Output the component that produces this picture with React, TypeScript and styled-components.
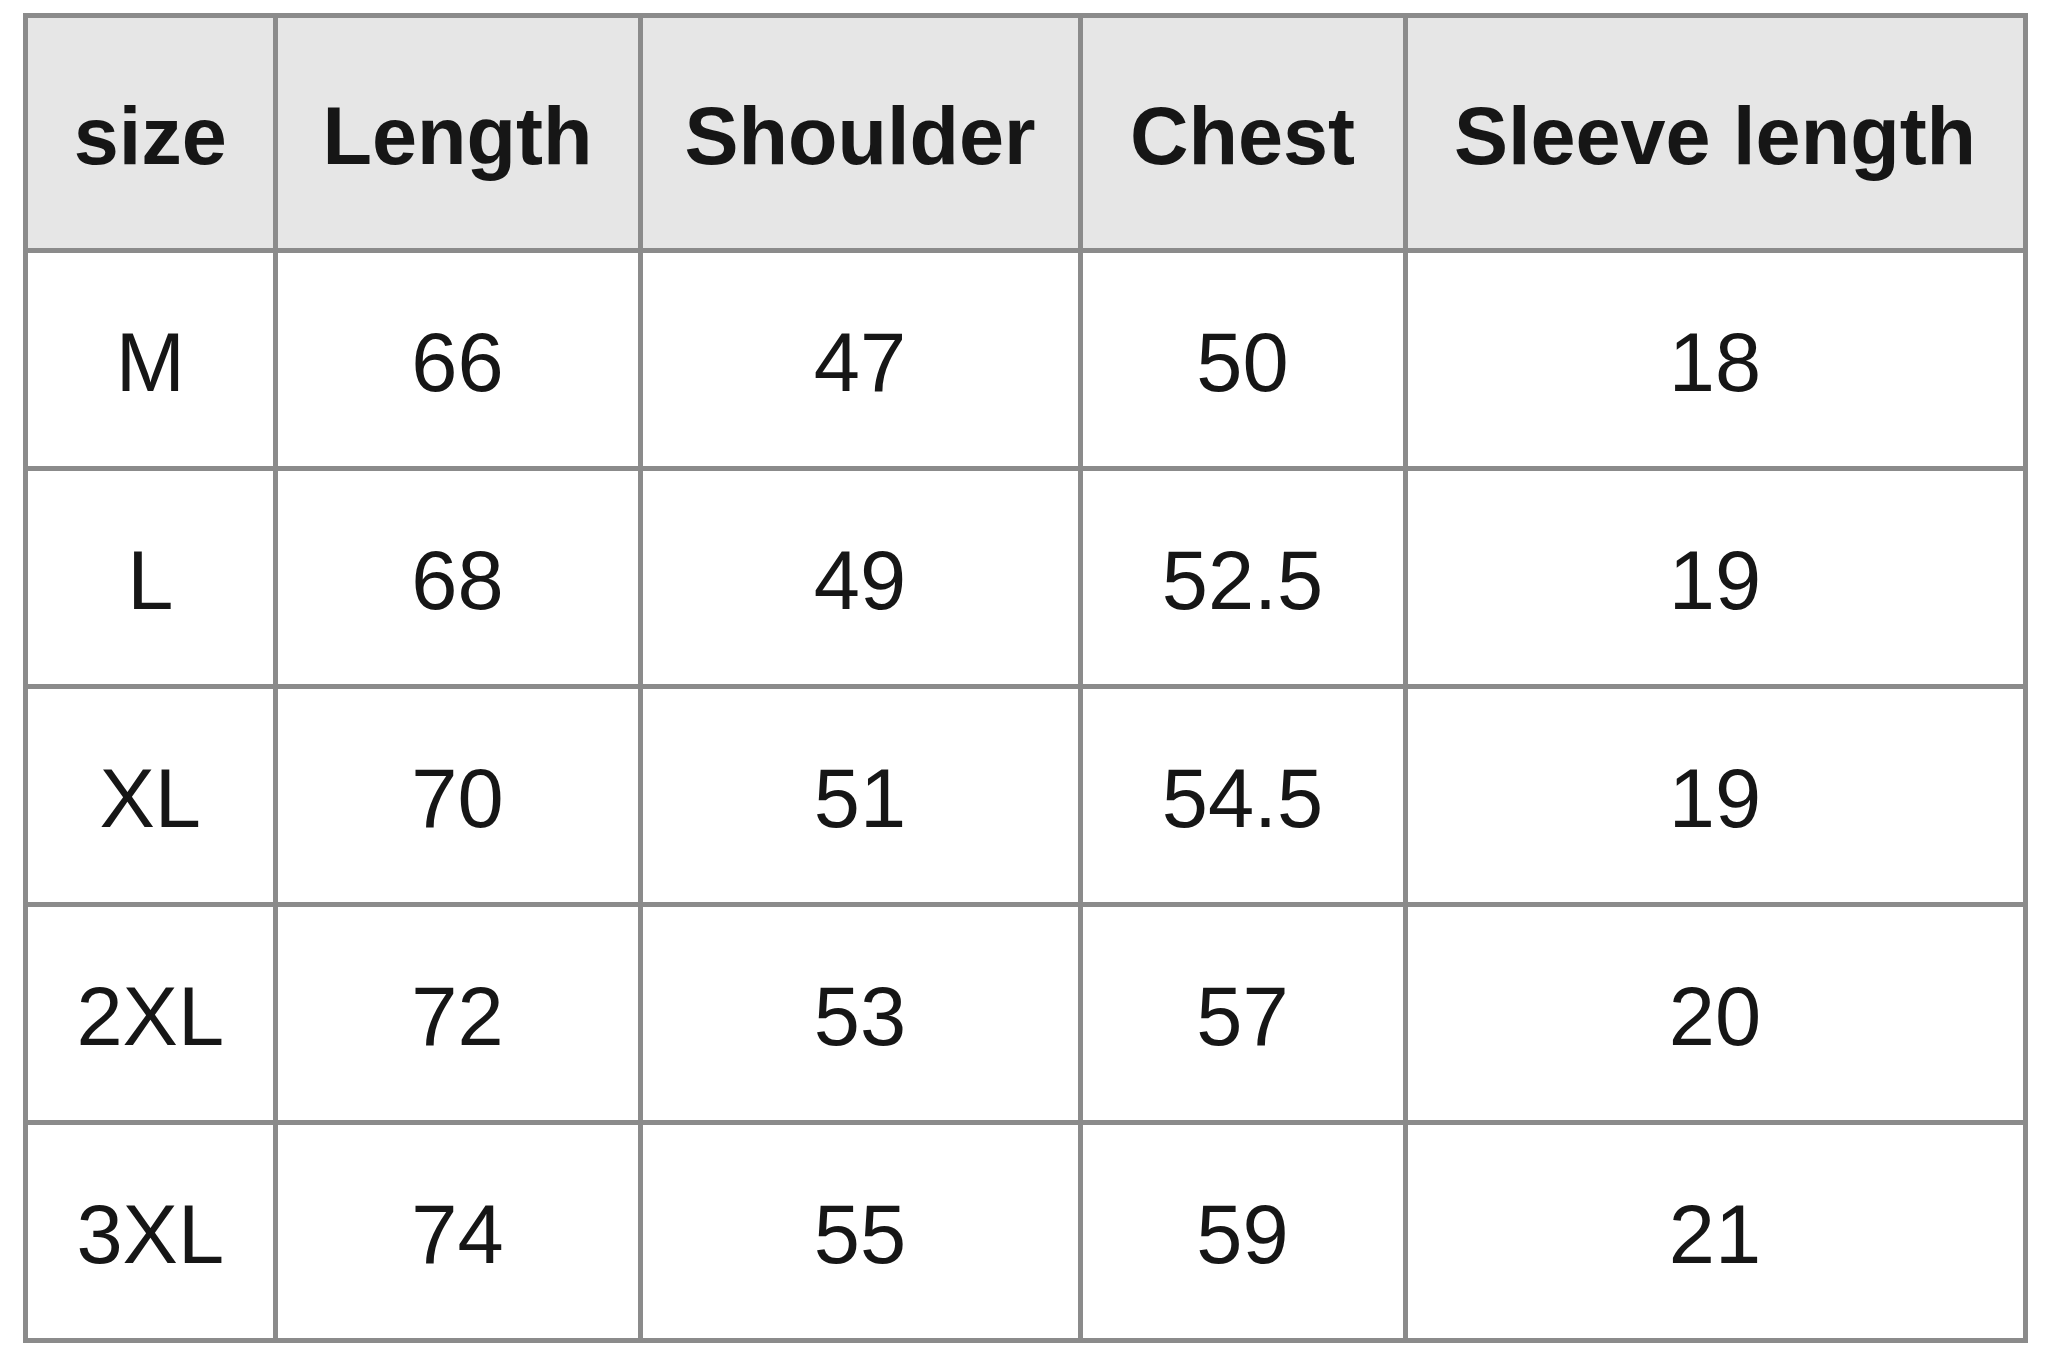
import styled, { createGlobalStyle } from 'styled-components';

const GlobalStyle = createGlobalStyle`
  html, body {
    margin: 0;
    padding: 0;
    background: #ffffff;
  }
  body {
    font-family: 'Liberation Sans', Arial, sans-serif;
  }
`;

const Page = styled.div`
  width: 2048px;
  height: 1355px;
  padding: 13px 0 0 23px;
  box-sizing: border-box;
  background: #ffffff;
`;

const Table = styled.div`
  display: grid;
  grid-template-columns: 244.5px 360px 435px 320px 615px;
  grid-template-rows: 230px repeat(5, 213px);
  gap: 5px;
  padding: 5px;
  width: 2005px;
  box-sizing: border-box;
  background: #8b8b8b;
`;

const Cell = styled.div<{ head?: boolean }>`
  display: flex;
  align-items: center;
  justify-content: center;
  background: ${(props) => (props.head ? '#e6e6e6' : '#ffffff')};
  color: #161616;
  font-size: ${(props) => (props.head ? '81px' : '83px')};
  font-weight: ${(props) => (props.head ? 700 : 400)};
  padding-top: 6px;
  box-sizing: border-box;
  white-space: nowrap;
`;

const headers = ['size', 'Length', 'Shoulder', 'Chest', 'Sleeve length'];

const rows = [
  ['M', '66', '47', '50', '18'],
  ['L', '68', '49', '52.5', '19'],
  ['XL', '70', '51', '54.5', '19'],
  ['2XL', '72', '53', '57', '20'],
  ['3XL', '74', '55', '59', '21'],
];

function App() {
  return (
    <Page>
      <GlobalStyle />
      <Table>
        {headers.map((h) => (
          <Cell head key={h}>
            {h}
          </Cell>
        ))}
        {rows.map((row, i) =>
          row.map((v, j) => <Cell key={`${i}-${j}`}>{v}</Cell>)
        )}
      </Table>
    </Page>
  );
}

export default App;
